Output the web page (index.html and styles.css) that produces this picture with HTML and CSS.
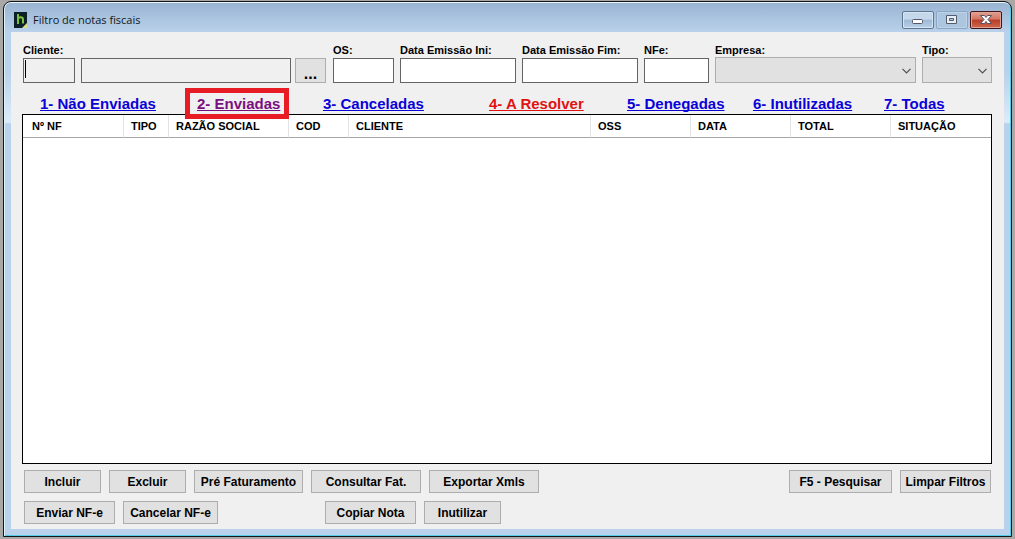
FILE: index.html
```html
<!DOCTYPE html>
<html lang="pt-BR">
<head>
<meta charset="utf-8">
<title>Filtro de notas fiscais</title>
<link rel="stylesheet" href="styles.css">
</head>
<body>
<div class="window">
  <header class="titlebar">
    <svg class="logo" viewBox="0 0 13 16" aria-hidden="true">
      <path d="M0 0h13v12l-4 4H0z" fill="#0d2027"/>
      <path d="M4 2v10M4 7.500c0-3 5-3 5 0v4" fill="none" stroke="#7cc03c" stroke-width="2"/>
      <path d="M13 11v5H8z" fill="#d9df90"/>
    </svg>
    <h1 class="title">Filtro de notas fiscais</h1>
    <div class="caption-buttons">
      <button class="caption" type="button" aria-label="Minimizar">
        <svg viewBox="0 0 32 18"><rect x="10.500" y="8.500" width="10" height="4" rx="1" fill="#fff" stroke="#535666"/></svg>
      </button>
      <button class="caption caption-dim" type="button" aria-label="Maximizar">
        <svg viewBox="0 0 32 18"><path d="M10.500 4.500h10v8h-10zM13.500 7.500h4v2h-4z" fill="#e9eef4" fill-rule="evenodd" stroke="#535b6c"/></svg>
      </button>
      <button class="caption caption-close" type="button" aria-label="Fechar">
        <svg viewBox="0 0 32 18"><path d="M10.500 4.500h4l1.500 2 1.500-2h4l-3.500 4 3.500 4h-4l-1.500-2-1.500 2h-4l3.500-4z" fill="#fff" stroke="#565366"/></svg>
      </button>
    </div>
  </header>
  <main class="content">
    <form class="filters">
      <div class="field client">
        <label for="cliente">Cliente:</label>
        <div class="client-row">
          <div class="code-wrap">
            <input class="box disabled" id="cliente" type="text">
            <span class="caret"></span>
          </div>
          <input class="box disabled" type="text" aria-label="Nome do cliente" readonly>
          <button class="browse" type="button">...</button>
        </div>
      </div>
      <div class="field"><label for="os">OS:</label><input class="box" id="os" type="text"></div>
      <div class="field"><label for="ini">Data Emissão Ini:</label><input class="box" id="ini" type="text"></div>
      <div class="field"><label for="fim">Data Emissão Fim:</label><input class="box" id="fim" type="text"></div>
      <div class="field"><label for="nfe">NFe:</label><input class="box" id="nfe" type="text"></div>
      <div class="field">
        <label for="empresa">Empresa:</label>
        <div class="select-wrap"><select class="combo" id="empresa"><option></option></select><svg class="chevron" viewBox="0 0 9 6" aria-hidden="true"><path d="M.5.8l4 4 4-4" fill="none" stroke="#505050" stroke-width="1.200"/></svg></div>
      </div>
      <div class="field">
        <label for="tipo">Tipo:</label>
        <div class="select-wrap"><select class="combo" id="tipo"><option></option></select><svg class="chevron" viewBox="0 0 9 6" aria-hidden="true"><path d="M.5.8l4 4 4-4" fill="none" stroke="#505050" stroke-width="1.200"/></svg></div>
      </div>
    </form>
    <nav class="tabs">
      <a href="#">1- Não Enviadas</a>
      <a class="visited" href="#">2- Enviadas<span class="highlight"></span></a>
      <a href="#">3- Canceladas</a>
      <a class="alert" href="#">4- A Resolver</a>
      <a href="#">5- Denegadas</a>
      <a href="#">6- Inutilizadas</a>
      <a href="#">7- Todas</a>
    </nav>
    <div class="list">
      <table class="grid">
        <colgroup><col class="w-nf"><col class="w-tipo"><col class="w-razao"><col class="w-cod"><col><col class="w-std"><col class="w-std"><col class="w-std"><col class="w-std"></colgroup>
        <thead>
          <tr><th>Nº NF</th><th>TIPO</th><th>RAZÃO SOCIAL</th><th>COD</th><th>CLIENTE</th><th>OSS</th><th>DATA</th><th>TOTAL</th><th>SITUAÇÃO</th></tr>
        </thead>
      </table>
    </div>
    <footer class="actions">
      <div class="row">
        <button class="btn s" type="button">Incluir</button>
        <button class="btn s" type="button">Excluir</button>
        <button class="btn lx" type="button">Pré Faturamento</button>
        <button class="btn xl" type="button">Consultar Fat.</button>
        <button class="btn xl" type="button">Exportar Xmls</button>
        <button class="btn l push" type="button">F5 - Pesquisar</button>
        <button class="btn m" type="button">Limpar Filtros</button>
      </div>
      <div class="row">
        <button class="btn m" type="button">Enviar NF-e</button>
        <button class="btn ml" type="button">Cancelar NF-e</button>
        <button class="btn m apart" type="button">Copiar Nota</button>
        <button class="btn s" type="button">Inutilizar</button>
      </div>
    </footer>
  </main>
</div>
</body>
</html>
```
FILE: styles.css
```css
* { box-sizing: border-box; }
body {
  margin: 0;
  padding: 1px 3px 2px;
  height: 100vh;
  display: flex;
  background: #a9a8a6;
  font: bold 11px/14px "Liberation Sans", Arial, sans-serif;
  color: #000;
}
button, input, select { font: inherit; color: inherit; margin: 0; padding: 0; border-radius: 0; }
.window {
  flex: 1;
  min-width: 0;
  display: flex;
  flex-direction: column;
  padding: 0 7px 7px;
  border: 1px solid #10171c;
  border-radius: 8px 8px 0 0;
  background: linear-gradient(#99b4d2 0, #b9d1ea 30px, #b9d1ea 70px, #dcecf9 120px, #b9d1ea 122px);
  box-shadow: inset 0 2px 0 -1px #eef6fc, inset 1px 0 #dff3fb, inset -1px -1px #4fcde8;
}
.titlebar { height: 30px; flex: none; display: flex; align-items: center; padding: 6px 2px 0 3px; }
.logo { width: 13px; height: 16px; margin-right: 6px; }
.title { margin: 0; font: 11px/16px "Open Sans", sans-serif; color: #101820; }
.caption-buttons { display: flex; gap: 2px; margin-left: auto; }
.caption {
  width: 32px;
  height: 18px;
  border: 1px solid #5f7590;
  border-radius: 2px;
  background: linear-gradient(#c5d8eb 0 45%, #9eb9d5 50%, #bad0e7);
  box-shadow: inset 0 0 0 1px #d6e5f3;
}
.caption svg { display: block; width: 32px; height: 18px; margin: -1px; }
.caption-dim { border-color: #8ba6c4; background: #adc6e0; box-shadow: inset 0 0 0 1px #bfd3e8; }
.caption-close {
  border-color: #43131a;
  background: linear-gradient(#e3a092 0, #d27561 45%, #b83d25 50%, #ce6a50);
  box-shadow: inset 0 0 0 1px #e0a496;
}
.content {
  flex: 1;
  min-height: 0;
  display: flex;
  flex-direction: column;
  padding: 11px 12px 5px 11px;
  background: #f0f0f0;
}
.filters {
  display: grid;
  grid-template-columns: 304px 61px 116px 116px 65px 1fr 70px;
  gap: 6px;
  padding-left: 1px;
}
.field { display: flex; flex-direction: column; justify-content: space-between; height: 40px; min-width: 0; }
.client-row { display: flex; gap: 6px; padding-right: 1px; }
.code-wrap { position: relative; width: 52px; flex: none; }
.box { width: 100%; min-width: 0; height: 25px; border: 1px solid #646464; background: #fff; padding: 0 3px; }
.disabled { background: #f0f0f0; }
.caret { position: absolute; left: 2px; top: 2px; width: 1px; height: 18px; background: #000; }
.browse {
  width: 31px;
  flex: none;
  height: 25px;
  margin-left: -2px;
  border: 1px solid #adadad;
  background: #e1e1e1;
  font-size: 16px;
  line-height: 30px;
}
.select-wrap { position: relative; }
.combo { display: block; appearance: none; width: 100%; height: 26px; border: 1px solid #adadad; background: #e1e1e1; }
.chevron { position: absolute; right: 5px; top: 11px; width: 9px; height: 6px; pointer-events: none; }
.tabs {
  display: grid;
  grid-template-columns: 157fr 126fr 166fr 138fr 126fr 131fr 108fr;
  padding: 12px 0 2px 18px;
  font-size: 15px;
  line-height: 17px;
}
.tabs a {
  position: relative;
  justify-self: start;
  color: #0a00d8;
  white-space: nowrap;
  text-decoration-thickness: 1px;
  text-decoration-skip-ink: none;
}
.tabs .visited { color: #7a0f80; }
.tabs .alert { color: #e01212; }
.highlight { position: absolute; inset: -7px -9px -7px -12px; border: 5px solid #e81c24; }
.list { flex: 1; min-height: 60px; border: 1px solid #000; background: #fff; }
.grid { width: 100%; table-layout: fixed; border-collapse: separate; border-spacing: 0; }
.grid th {
  height: 23px;
  padding: 0 0 0 7px;
  text-align: left;
  border-right: 1px solid #e3e3e3;
  border-bottom: 1px solid #a6a6a6;
}
.grid th:first-child { padding-left: 9px; }
.grid th:last-child { border-right: 0; }
.w-nf { width: 101px; }
.w-tipo { width: 45px; }
.w-razao { width: 120px; }
.w-cod { width: 60px; }
.w-std { width: 100px; }
.actions { display: flex; flex-direction: column; gap: 8px; padding: 6px 1px 0 2px; }
.row { display: flex; gap: 8px; }
.btn { height: 23px; border: 1px solid #adadad; background: #e1e1e1; font-size: 12px; white-space: nowrap; }
.s { width: 77px; }
.m { width: 91px; }
.ml { width: 95px; }
.l { width: 103px; }
.lx { width: 109px; }
.xl { width: 110px; }
.push { margin-left: auto; }
.apart { margin-left: 99px; }
```
